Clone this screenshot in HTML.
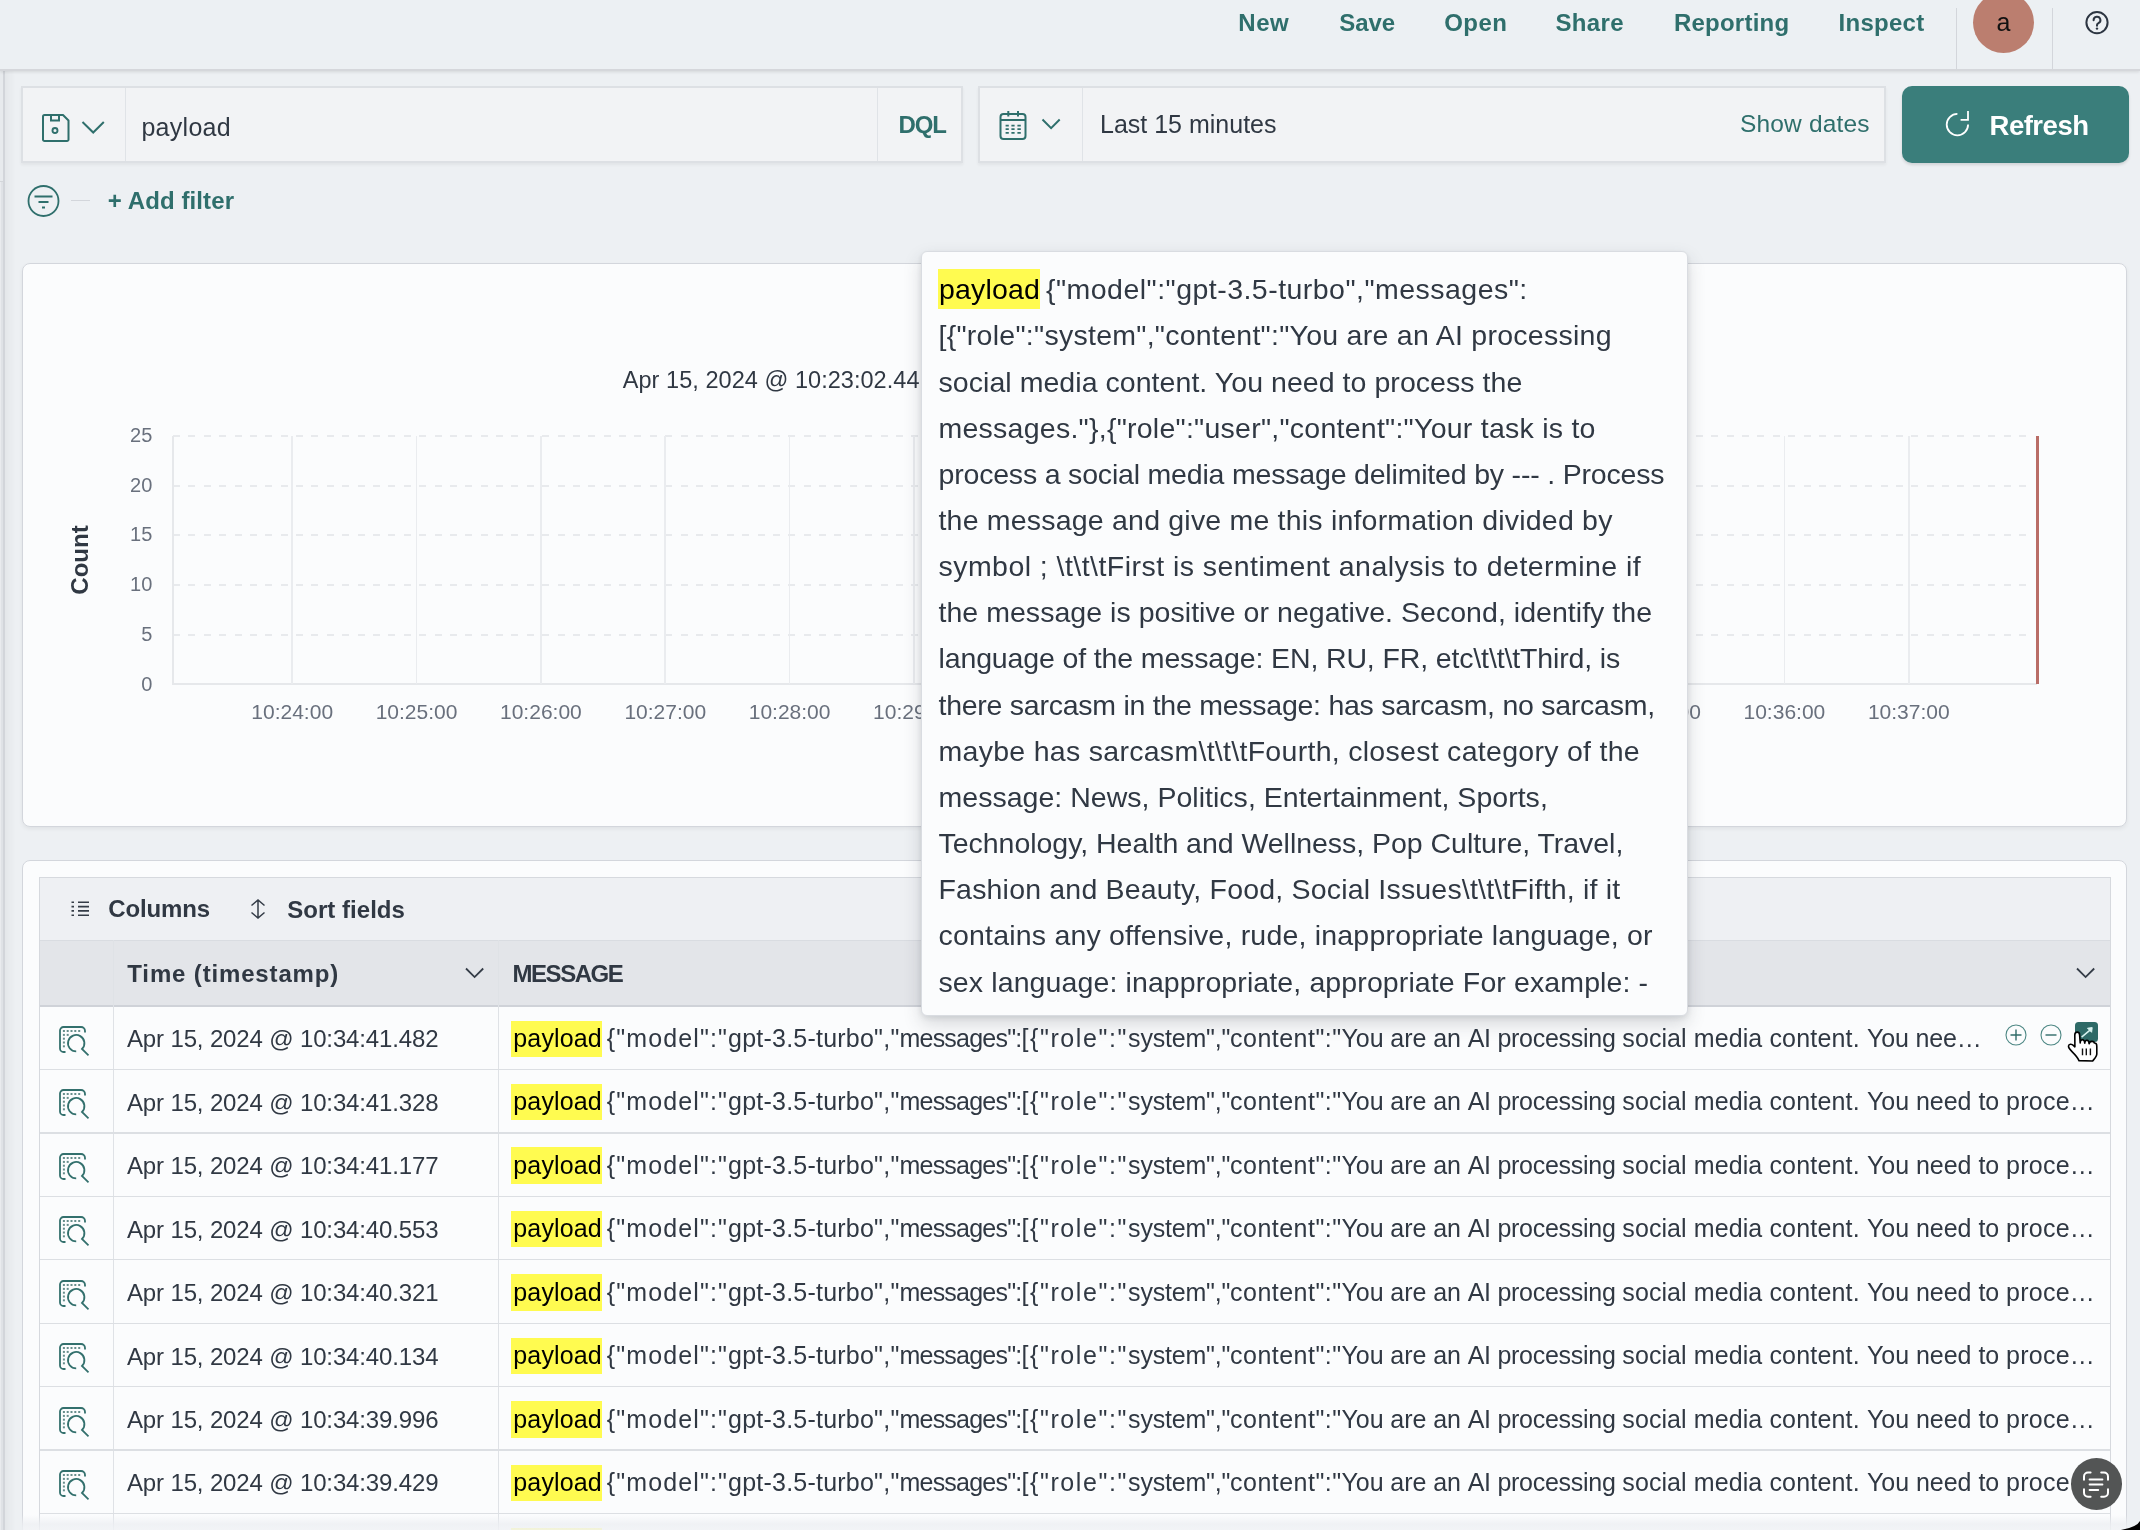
<!DOCTYPE html>
<html><head><meta charset="utf-8"><style>
html,body{margin:0;padding:0;}
body{width:2140px;height:1530px;overflow:hidden;background:#edf0f3;position:relative;font-family:"Liberation Sans", sans-serif;}
.a{position:absolute;}
.t{position:absolute;white-space:pre;line-height:1;}
</style></head><body>
<div id="root" style="position:absolute;left:0;top:0;width:2140px;height:1530px;will-change:transform;">
<div class="a" style="left:0.00px;top:69.00px;width:3.40px;height:112.00px;background:#e7eaed;"></div>
<div class="a" style="left:0.00px;top:181.00px;width:3.40px;height:1349.00px;background:#dfe2e6;"></div>
<div class="a" style="left:0.00px;top:180.50px;width:3.40px;height:1.50px;background:#d3d6da;"></div>
<div class="a" style="left:0.00px;top:182.00px;width:1.30px;height:1348.00px;background:#e9ebee;"></div>
<div class="a" style="left:3.30px;top:69.00px;width:1.30px;height:1461.00px;background:#d2d5da;"></div>
<div class="a" style="left:4.60px;top:69.00px;width:11.40px;height:1461.00px;background:linear-gradient(90deg,rgba(0,0,0,0.035),rgba(0,0,0,0));"></div>
<div class="a" style="left:0.00px;top:0.00px;width:2140.00px;height:70.50px;background:#ecf0f3;border-bottom:2px solid #d5d7db;box-sizing:border-box;box-shadow:0 1px 3px rgba(0,0,0,0.08),0 2px 4px rgba(0,0,0,0.03);"></div>
<div class="t" style="left:1238.20px;top:11.18px;font-size:24px;color:#2f6f6c;font-weight:700;letter-spacing:0.620px;">New</div>
<div class="t" style="left:1339.20px;top:11.18px;font-size:24px;color:#2f6f6c;font-weight:700;letter-spacing:-0.021px;">Save</div>
<div class="t" style="left:1444.30px;top:11.18px;font-size:24px;color:#2f6f6c;font-weight:700;letter-spacing:0.385px;">Open</div>
<div class="t" style="left:1555.50px;top:11.18px;font-size:24px;color:#2f6f6c;font-weight:700;letter-spacing:0.324px;">Share</div>
<div class="t" style="left:1673.90px;top:11.18px;font-size:24px;color:#2f6f6c;font-weight:700;letter-spacing:0.246px;">Reporting</div>
<div class="t" style="left:1838.60px;top:11.18px;font-size:24px;color:#2f6f6c;font-weight:700;letter-spacing:0.261px;">Inspect</div>
<div class="a" style="left:1956.10px;top:7.50px;width:1.00px;height:61.50px;background:#d3d6db;"></div>
<div class="a" style="left:2051.90px;top:7.50px;width:1.00px;height:61.50px;background:#d3d6db;"></div>
<div class="a" style="left:1973px;top:-8px;width:61.4px;height:61.4px;border-radius:50%;background:#bb7e6f;"></div>
<div class="t" style="left:2003.50px;top:10.34px;font-size:25px;color:#111;font-weight:400;transform:translateX(-50%);">a</div>
<svg class="a" style="left:2084px;top:10px" width="26" height="26" viewBox="0 0 26 26"><circle cx="13" cy="12.6" r="10.6" fill="none" stroke="#2c3541" stroke-width="2"/><path d="M9.6 10.2a3.4 3.4 0 1 1 4.6 3.1c-.8.4-1.2 1-1.2 1.8v.7" fill="none" stroke="#2c3541" stroke-width="2" stroke-linecap="round"/><circle cx="13" cy="18.6" r="1.2" fill="#2c3541"/></svg>
<div class="a" style="left:21.00px;top:86.00px;width:942.00px;height:77.00px;background:#f2f3f5;border:2px solid #dde0e4;box-sizing:border-box;box-shadow:0 2px 3px rgba(0,0,0,0.05);"></div>
<div class="a" style="left:124.80px;top:88.00px;width:1.20px;height:73.00px;background:#e0e3e7;"></div>
<div class="a" style="left:876.80px;top:88.00px;width:1.20px;height:73.00px;background:#e0e3e7;"></div>
<svg class="a" style="left:41px;top:113px" width="30" height="30" viewBox="0 0 30 30"><path d="M3.5 2h18.5l5.5 5.5V26.5a1.5 1.5 0 0 1-1.5 1.5H3.5a1.5 1.5 0 0 1-1.5-1.5V3.5A1.5 1.5 0 0 1 3.5 2z" fill="none" stroke="#2f6f6c" stroke-width="2" stroke-linejoin="round"/><path d="M10 2v5.5h8V2" fill="none" stroke="#2f6f6c" stroke-width="2"/><circle cx="14" cy="17.5" r="2.5" fill="none" stroke="#2f6f6c" stroke-width="1.9"/></svg>
<svg class="a" style="left:81px;top:120px" width="26" height="16" viewBox="0 0 26 16"><path d="M1.5 2l10.7 10.5L22.8 2" fill="none" stroke="#2f6f6c" stroke-width="2"/></svg>
<div class="t" style="left:141.40px;top:114.84px;font-size:25px;color:#303843;font-weight:400;letter-spacing:0.287px;">payload</div>
<div class="t" style="left:898.50px;top:113.18px;font-size:24px;color:#2f6f6c;font-weight:700;letter-spacing:-1.186px;">DQL</div>
<div class="a" style="left:978.20px;top:86.00px;width:907.80px;height:77.00px;background:#f2f3f5;border:2px solid #dde0e4;box-sizing:border-box;box-shadow:0 2px 3px rgba(0,0,0,0.05);"></div>
<div class="a" style="left:1082.30px;top:88.00px;width:1.20px;height:73.00px;background:#e0e3e7;"></div>
<svg class="a" style="left:998px;top:110px" width="30" height="31" viewBox="0 0 30 31"><rect x="2.5" y="4" width="25" height="25" rx="3" fill="none" stroke="#2f6f6c" stroke-width="2"/><path d="M2.5 10h25M10.3 1v5.5M20 1v5.5" stroke="#2f6f6c" stroke-width="2"/><path d="M7.6 15.6h3.2M13.4 15.6h3.2M19.4 15.6h3.4M7.6 19.1h3.2M13.4 19.1h3.2M19.4 19.1h3.4M7.6 22.9h3.2M13.4 22.9h3.2M19.4 22.9h3.4" stroke="#2f6f6c" stroke-width="1.7"/></svg>
<svg class="a" style="left:1041px;top:117px" width="22" height="14" viewBox="0 0 22 14"><path d="M1.5 2.5l8.6 8.6 8.6-8.6" fill="none" stroke="#2f6f6c" stroke-width="2"/></svg>
<div class="t" style="left:1100.00px;top:111.84px;font-size:25px;color:#303843;font-weight:400;">Last 15 minutes</div>
<div class="t" style="left:1740.00px;top:112.46px;font-size:24.5px;color:#2f6f6c;font-weight:400;letter-spacing:0.163px;">Show dates</div>
<div class="a" style="left:1901.50px;top:86.00px;width:227.10px;height:76.60px;background:#3a7e7b;border-radius:10px;box-shadow:0 2px 3px rgba(0,0,0,0.12);"></div>
<svg class="a" style="left:1943px;top:108px" width="30" height="30" viewBox="0 0 30 30"><path d="M14.4 5.9A10.7 10.7 0 1 0 25.1 16.6" fill="none" stroke="#fff" stroke-width="1.8"/><path d="M25 3v8.9h-7.4" fill="none" stroke="#fff" stroke-width="1.8"/></svg>
<div class="t" style="left:1989.50px;top:111.62px;font-size:27.5px;color:#fff;font-weight:700;letter-spacing:-0.484px;">Refresh</div>
<svg class="a" style="left:26px;top:184px" width="36" height="36" viewBox="0 0 36 36"><circle cx="17.5" cy="17" r="15" fill="none" stroke="#2f6f6c" stroke-width="1.8"/><path d="M8.5 12.5h18M12.5 18h10M16 23.5h3" stroke="#2f6f6c" stroke-width="2"/></svg>
<div class="a" style="left:70.60px;top:199.70px;width:19.40px;height:1.50px;background:#d3d6db;"></div>
<div class="t" style="left:107.70px;top:189.38px;font-size:24px;color:#2f6f6c;font-weight:700;letter-spacing:0.107px;">+ Add filter</div>
<div class="a" style="left:21.60px;top:263.40px;width:2105.90px;height:563.30px;background:#fbfcfd;border:1px solid #d3d6dc;border-radius:8px;box-sizing:border-box;box-shadow:0 2px 4px rgba(0,0,0,0.06);"></div>
<div class="t" style="left:622.80px;top:368.61px;font-size:23.5px;color:#303843;font-weight:400;letter-spacing:0.042px;">Apr 15, 2024 @ 10:23:02.44</div>
<div class="t" style="right:1987.70px;top:425.07px;font-size:20px;color:#69707d;font-weight:400;">25</div>
<div class="a" style="left:173.1px;top:434.8px;width:1854px;height:2px;background:repeating-linear-gradient(90deg,#e8eaed 0 7px,transparent 7px 15.383px);"></div>
<div class="t" style="right:1987.70px;top:474.77px;font-size:20px;color:#69707d;font-weight:400;">20</div>
<div class="a" style="left:173.1px;top:484.5px;width:1854px;height:2px;background:repeating-linear-gradient(90deg,#e8eaed 0 7px,transparent 7px 15.383px);"></div>
<div class="t" style="right:1987.70px;top:524.47px;font-size:20px;color:#69707d;font-weight:400;">15</div>
<div class="a" style="left:173.1px;top:534.2px;width:1854px;height:2px;background:repeating-linear-gradient(90deg,#e8eaed 0 7px,transparent 7px 15.383px);"></div>
<div class="t" style="right:1987.70px;top:574.17px;font-size:20px;color:#69707d;font-weight:400;">10</div>
<div class="a" style="left:173.1px;top:583.9px;width:1854px;height:2px;background:repeating-linear-gradient(90deg,#e8eaed 0 7px,transparent 7px 15.383px);"></div>
<div class="t" style="right:1987.70px;top:623.87px;font-size:20px;color:#69707d;font-weight:400;">5</div>
<div class="a" style="left:173.1px;top:633.6px;width:1854px;height:2px;background:repeating-linear-gradient(90deg,#e8eaed 0 7px,transparent 7px 15.383px);"></div>
<div class="t" style="right:1987.70px;top:673.57px;font-size:20px;color:#69707d;font-weight:400;">0</div>
<div class="a" style="left:172.00px;top:683.30px;width:1865.00px;height:1.70px;background:#e6e8eb;"></div>
<div class="a" style="left:172.00px;top:435.80px;width:1.80px;height:249.20px;background:#e6e8eb;"></div>
<div class="a" style="left:291.40px;top:435.80px;width:1.60px;height:248.20px;background:#eaecef;"></div>
<div class="t" style="left:292.20px;top:700.82px;font-size:21px;color:#69707d;font-weight:400;transform:translateX(-50%);">10:24:00</div>
<div class="a" style="left:415.75px;top:435.80px;width:1.60px;height:248.20px;background:#eaecef;"></div>
<div class="t" style="left:416.55px;top:700.82px;font-size:21px;color:#69707d;font-weight:400;transform:translateX(-50%);">10:25:00</div>
<div class="a" style="left:540.10px;top:435.80px;width:1.60px;height:248.20px;background:#eaecef;"></div>
<div class="t" style="left:540.90px;top:700.82px;font-size:21px;color:#69707d;font-weight:400;transform:translateX(-50%);">10:26:00</div>
<div class="a" style="left:664.45px;top:435.80px;width:1.60px;height:248.20px;background:#eaecef;"></div>
<div class="t" style="left:665.25px;top:700.82px;font-size:21px;color:#69707d;font-weight:400;transform:translateX(-50%);">10:27:00</div>
<div class="a" style="left:788.80px;top:435.80px;width:1.60px;height:248.20px;background:#eaecef;"></div>
<div class="t" style="left:789.60px;top:700.82px;font-size:21px;color:#69707d;font-weight:400;transform:translateX(-50%);">10:28:00</div>
<div class="a" style="left:913.15px;top:435.80px;width:1.60px;height:248.20px;background:#eaecef;"></div>
<div class="t" style="left:913.95px;top:700.82px;font-size:21px;color:#69707d;font-weight:400;transform:translateX(-50%);">10:29:00</div>
<div class="a" style="left:1037.50px;top:435.80px;width:1.60px;height:248.20px;background:#eaecef;"></div>
<div class="t" style="left:1038.30px;top:700.82px;font-size:21px;color:#69707d;font-weight:400;transform:translateX(-50%);">10:30:00</div>
<div class="a" style="left:1161.85px;top:435.80px;width:1.60px;height:248.20px;background:#eaecef;"></div>
<div class="t" style="left:1162.65px;top:700.82px;font-size:21px;color:#69707d;font-weight:400;transform:translateX(-50%);">10:31:00</div>
<div class="a" style="left:1286.20px;top:435.80px;width:1.60px;height:248.20px;background:#eaecef;"></div>
<div class="t" style="left:1287.00px;top:700.82px;font-size:21px;color:#69707d;font-weight:400;transform:translateX(-50%);">10:32:00</div>
<div class="a" style="left:1410.55px;top:435.80px;width:1.60px;height:248.20px;background:#eaecef;"></div>
<div class="t" style="left:1411.35px;top:700.82px;font-size:21px;color:#69707d;font-weight:400;transform:translateX(-50%);">10:33:00</div>
<div class="a" style="left:1534.90px;top:435.80px;width:1.60px;height:248.20px;background:#eaecef;"></div>
<div class="t" style="left:1535.70px;top:700.82px;font-size:21px;color:#69707d;font-weight:400;transform:translateX(-50%);">10:34:00</div>
<div class="a" style="left:1659.25px;top:435.80px;width:1.60px;height:248.20px;background:#eaecef;"></div>
<div class="t" style="left:1660.05px;top:700.82px;font-size:21px;color:#69707d;font-weight:400;transform:translateX(-50%);">10:35:00</div>
<div class="a" style="left:1783.60px;top:435.80px;width:1.60px;height:248.20px;background:#eaecef;"></div>
<div class="t" style="left:1784.40px;top:700.82px;font-size:21px;color:#69707d;font-weight:400;transform:translateX(-50%);">10:36:00</div>
<div class="a" style="left:1907.95px;top:435.80px;width:1.60px;height:248.20px;background:#eaecef;"></div>
<div class="t" style="left:1908.75px;top:700.82px;font-size:21px;color:#69707d;font-weight:400;transform:translateX(-50%);">10:37:00</div>
<div class="a" style="left:2035.50px;top:435.70px;width:3.30px;height:248.00px;background:#b96d67;"></div>
<div class="a" style="left:71px;top:559.4px;width:0;height:0;"><div style="position:absolute;left:0;top:0;transform:translate(-50%,-50%) rotate(-90deg);white-space:nowrap;"></div></div>
<div class="t" style="left:80.30px;top:547.58px;font-size:24px;color:#303843;font-weight:700;transform:translateX(-50%) rotate(-90deg);transform-origin:50% 50%;">Count</div>
<div class="a" style="left:22.00px;top:860.00px;width:2105.00px;height:740.00px;background:#fbfcfd;border:1px solid #d3d6dc;border-radius:8px;box-sizing:border-box;"></div>
<div class="a" style="left:38.50px;top:877.00px;width:2072.00px;height:723.00px;background:#fbfcfd;border:1px solid #d6d9de;box-sizing:border-box;"></div>
<div class="a" style="left:39.50px;top:878.00px;width:2070.00px;height:62.40px;background:#eef0f3;"></div>
<svg class="a" style="left:70px;top:899px" width="22" height="20" viewBox="0 0 22 20"><path d="M1.5 3.3h2.5M1.5 7.6h2.5M1.5 11.9h2.5M1.5 16.2h2.5M8 3.3h11M8 7.6h11M8 11.9h11M8 16.2h11" stroke="#343c47" stroke-width="1.6"/></svg>
<div class="t" style="left:108.20px;top:897.28px;font-size:24px;color:#303843;font-weight:700;letter-spacing:-0.129px;">Columns</div>
<svg class="a" style="left:249px;top:898px" width="18" height="22" viewBox="0 0 18 22"><path d="M2.5 7.5l6.5-5.5L15.5 7.5M2.5 14.5l6.5 5.5 6.5-5.5M9 2v18" fill="none" stroke="#343c47" stroke-width="1.5"/></svg>
<div class="t" style="left:287.20px;top:897.58px;font-size:24px;color:#303843;font-weight:700;letter-spacing:0.034px;">Sort fields</div>
<div class="a" style="left:39.50px;top:940.40px;width:2070.00px;height:65.60px;background:#e3e5e9;border-top:1px solid #d9dce1;box-sizing:border-box;"></div>
<div class="a" style="left:39.50px;top:1005.30px;width:2070.00px;height:1.30px;background:#cfd2d8;"></div>
<div class="a" style="left:113.20px;top:940.40px;width:1.20px;height:659.60px;background:#dfe2e6;"></div>
<div class="a" style="left:498.00px;top:940.40px;width:1.20px;height:659.60px;background:#dfe2e6;"></div>
<div class="t" style="left:127.30px;top:961.68px;font-size:24px;color:#303843;font-weight:700;letter-spacing:0.848px;">Time (timestamp)</div>
<svg class="a" style="left:464px;top:966px" width="22" height="14" viewBox="0 0 22 14"><path d="M2 2.5l8.6 8.6 8.6-8.6" fill="none" stroke="#343c47" stroke-width="1.8"/></svg>
<div class="t" style="left:512.60px;top:961.68px;font-size:24px;color:#303843;font-weight:700;letter-spacing:-1.489px;">MESSAGE</div>
<svg class="a" style="left:2075px;top:966px" width="22" height="14" viewBox="0 0 22 14"><path d="M2 2.5l8.6 8.6 8.6-8.6" fill="none" stroke="#343c47" stroke-width="1.8"/></svg>
<div class="a" style="left:39.50px;top:1068.80px;width:2070.00px;height:1.30px;background:#dcdfe3;"></div>
<svg class="a" style="left:54px;top:1020.0px" width="40" height="40" viewBox="0 0 40 40"><path d="M11.5 32H9.5A3.5 3.5 0 0 1 6 28.5V10.5A3.5 3.5 0 0 1 9.5 7H27A4 4 0 0 1 31 11V12.6" fill="none" stroke="#33706d" stroke-width="1.8"/><g fill="#678e8c"><rect x="8.9" y="10.0" width="2" height="2"/><rect x="12.7" y="10.0" width="2" height="2"/><rect x="16.5" y="10.0" width="2" height="2"/><rect x="20.3" y="10.0" width="2" height="2"/><rect x="24.2" y="10.0" width="2" height="2"/><rect x="8.9" y="13.9" width="2" height="2"/><rect x="12.7" y="13.9" width="2" height="2"/><rect x="8.9" y="17.7" width="2" height="2"/><rect x="8.9" y="21.5" width="2" height="2"/><rect x="8.9" y="25.3" width="2" height="2"/></g><path d="M22.2 31.4A8.2 8.2 0 1 1 28 29L34.5 35.3" fill="none" stroke="#33706d" stroke-width="1.8"/></svg>
<div class="t" style="left:127.00px;top:1027.48px;font-size:24px;color:#303843;font-weight:400;letter-spacing:-0.145px;">Apr 15, 2024 @ 10:34:41.482</div>
<div class="a" style="left:511.20px;top:1020.60px;width:90.70px;height:36.40px;background:#fffb50;"></div>
<div class="t" style="left:513.30px;top:1026.04px;font-size:25px;color:#000;font-weight:400;letter-spacing:0.137px;">payload</div>
<div class="t" style="left:606.80px;top:1026.04px;font-size:25px;color:#303843;font-weight:400;letter-spacing:1.128px;">{&quot;model&quot;:&quot;</div>
<div class="t" style="left:728.10px;top:1026.04px;font-size:25px;color:#303843;font-weight:400;letter-spacing:0.222px;">gpt-3.5-turbo&quot;,&quot;</div>
<div class="t" style="left:899.50px;top:1026.04px;font-size:25px;color:#303843;font-weight:400;letter-spacing:-0.787px;">messages&quot;:</div>
<div class="t" style="left:1021.40px;top:1026.04px;font-size:25px;color:#303843;font-weight:400;letter-spacing:1.614px;">[{&quot;role&quot;:&quot;</div>
<div class="t" style="left:1128.10px;top:1026.04px;font-size:25px;color:#303843;font-weight:400;letter-spacing:-0.208px;">system&quot;,&quot;</div>
<div class="t" style="left:1230.10px;top:1026.04px;font-size:25px;color:#303843;font-weight:400;letter-spacing:0.470px;">content&quot;:&quot;</div>
<div class="t" style="left:1341.50px;top:1026.04px;font-size:25px;color:#303843;font-weight:400;letter-spacing:-0.070px;">You are an </div>
<div class="t" style="left:1467.70px;top:1026.04px;font-size:25px;color:#303843;font-weight:400;letter-spacing:-0.273px;">AI processing </div>
<div class="t" style="left:1622.30px;top:1026.04px;font-size:25px;color:#303843;font-weight:400;letter-spacing:0.092px;">social media </div>
<div class="t" style="left:1769.40px;top:1026.04px;font-size:25px;color:#303843;font-weight:400;letter-spacing:0.188px;">content. </div>
<div class="t" style="left:1867.00px;top:1026.04px;font-size:25px;color:#303843;font-weight:400;letter-spacing:-0.151px;">You nee…</div>
<div class="a" style="left:39.50px;top:1132.23px;width:2070.00px;height:1.30px;background:#dcdfe3;"></div>
<svg class="a" style="left:54px;top:1083.4px" width="40" height="40" viewBox="0 0 40 40"><path d="M11.5 32H9.5A3.5 3.5 0 0 1 6 28.5V10.5A3.5 3.5 0 0 1 9.5 7H27A4 4 0 0 1 31 11V12.6" fill="none" stroke="#33706d" stroke-width="1.8"/><g fill="#678e8c"><rect x="8.9" y="10.0" width="2" height="2"/><rect x="12.7" y="10.0" width="2" height="2"/><rect x="16.5" y="10.0" width="2" height="2"/><rect x="20.3" y="10.0" width="2" height="2"/><rect x="24.2" y="10.0" width="2" height="2"/><rect x="8.9" y="13.9" width="2" height="2"/><rect x="12.7" y="13.9" width="2" height="2"/><rect x="8.9" y="17.7" width="2" height="2"/><rect x="8.9" y="21.5" width="2" height="2"/><rect x="8.9" y="25.3" width="2" height="2"/></g><path d="M22.2 31.4A8.2 8.2 0 1 1 28 29L34.5 35.3" fill="none" stroke="#33706d" stroke-width="1.8"/></svg>
<div class="t" style="left:127.00px;top:1090.91px;font-size:24px;color:#303843;font-weight:400;letter-spacing:-0.145px;">Apr 15, 2024 @ 10:34:41.328</div>
<div class="a" style="left:511.20px;top:1084.03px;width:90.70px;height:36.40px;background:#fffb50;"></div>
<div class="t" style="left:513.30px;top:1089.47px;font-size:25px;color:#000;font-weight:400;letter-spacing:0.137px;">payload</div>
<div class="t" style="left:606.80px;top:1089.47px;font-size:25px;color:#303843;font-weight:400;letter-spacing:1.128px;">{&quot;model&quot;:&quot;</div>
<div class="t" style="left:728.10px;top:1089.47px;font-size:25px;color:#303843;font-weight:400;letter-spacing:0.222px;">gpt-3.5-turbo&quot;,&quot;</div>
<div class="t" style="left:899.50px;top:1089.47px;font-size:25px;color:#303843;font-weight:400;letter-spacing:-0.787px;">messages&quot;:</div>
<div class="t" style="left:1021.40px;top:1089.47px;font-size:25px;color:#303843;font-weight:400;letter-spacing:1.614px;">[{&quot;role&quot;:&quot;</div>
<div class="t" style="left:1128.10px;top:1089.47px;font-size:25px;color:#303843;font-weight:400;letter-spacing:-0.208px;">system&quot;,&quot;</div>
<div class="t" style="left:1230.10px;top:1089.47px;font-size:25px;color:#303843;font-weight:400;letter-spacing:0.470px;">content&quot;:&quot;</div>
<div class="t" style="left:1341.50px;top:1089.47px;font-size:25px;color:#303843;font-weight:400;letter-spacing:-0.070px;">You are an </div>
<div class="t" style="left:1467.70px;top:1089.47px;font-size:25px;color:#303843;font-weight:400;letter-spacing:-0.273px;">AI processing </div>
<div class="t" style="left:1622.30px;top:1089.47px;font-size:25px;color:#303843;font-weight:400;letter-spacing:0.092px;">social media </div>
<div class="t" style="left:1769.40px;top:1089.47px;font-size:25px;color:#303843;font-weight:400;letter-spacing:0.188px;">content. </div>
<div class="t" style="left:1867.00px;top:1089.47px;font-size:25px;color:#303843;font-weight:400;letter-spacing:-0.033px;">You need to </div>
<div class="t" style="left:2006.10px;top:1089.47px;font-size:25px;color:#303843;font-weight:400;letter-spacing:0.231px;">proce…</div>
<div class="a" style="left:39.50px;top:1195.66px;width:2070.00px;height:1.30px;background:#dcdfe3;"></div>
<svg class="a" style="left:54px;top:1146.9px" width="40" height="40" viewBox="0 0 40 40"><path d="M11.5 32H9.5A3.5 3.5 0 0 1 6 28.5V10.5A3.5 3.5 0 0 1 9.5 7H27A4 4 0 0 1 31 11V12.6" fill="none" stroke="#33706d" stroke-width="1.8"/><g fill="#678e8c"><rect x="8.9" y="10.0" width="2" height="2"/><rect x="12.7" y="10.0" width="2" height="2"/><rect x="16.5" y="10.0" width="2" height="2"/><rect x="20.3" y="10.0" width="2" height="2"/><rect x="24.2" y="10.0" width="2" height="2"/><rect x="8.9" y="13.9" width="2" height="2"/><rect x="12.7" y="13.9" width="2" height="2"/><rect x="8.9" y="17.7" width="2" height="2"/><rect x="8.9" y="21.5" width="2" height="2"/><rect x="8.9" y="25.3" width="2" height="2"/></g><path d="M22.2 31.4A8.2 8.2 0 1 1 28 29L34.5 35.3" fill="none" stroke="#33706d" stroke-width="1.8"/></svg>
<div class="t" style="left:127.00px;top:1154.34px;font-size:24px;color:#303843;font-weight:400;letter-spacing:-0.145px;">Apr 15, 2024 @ 10:34:41.177</div>
<div class="a" style="left:511.20px;top:1147.46px;width:90.70px;height:36.40px;background:#fffb50;"></div>
<div class="t" style="left:513.30px;top:1152.90px;font-size:25px;color:#000;font-weight:400;letter-spacing:0.137px;">payload</div>
<div class="t" style="left:606.80px;top:1152.90px;font-size:25px;color:#303843;font-weight:400;letter-spacing:1.128px;">{&quot;model&quot;:&quot;</div>
<div class="t" style="left:728.10px;top:1152.90px;font-size:25px;color:#303843;font-weight:400;letter-spacing:0.222px;">gpt-3.5-turbo&quot;,&quot;</div>
<div class="t" style="left:899.50px;top:1152.90px;font-size:25px;color:#303843;font-weight:400;letter-spacing:-0.787px;">messages&quot;:</div>
<div class="t" style="left:1021.40px;top:1152.90px;font-size:25px;color:#303843;font-weight:400;letter-spacing:1.614px;">[{&quot;role&quot;:&quot;</div>
<div class="t" style="left:1128.10px;top:1152.90px;font-size:25px;color:#303843;font-weight:400;letter-spacing:-0.208px;">system&quot;,&quot;</div>
<div class="t" style="left:1230.10px;top:1152.90px;font-size:25px;color:#303843;font-weight:400;letter-spacing:0.470px;">content&quot;:&quot;</div>
<div class="t" style="left:1341.50px;top:1152.90px;font-size:25px;color:#303843;font-weight:400;letter-spacing:-0.070px;">You are an </div>
<div class="t" style="left:1467.70px;top:1152.90px;font-size:25px;color:#303843;font-weight:400;letter-spacing:-0.273px;">AI processing </div>
<div class="t" style="left:1622.30px;top:1152.90px;font-size:25px;color:#303843;font-weight:400;letter-spacing:0.092px;">social media </div>
<div class="t" style="left:1769.40px;top:1152.90px;font-size:25px;color:#303843;font-weight:400;letter-spacing:0.188px;">content. </div>
<div class="t" style="left:1867.00px;top:1152.90px;font-size:25px;color:#303843;font-weight:400;letter-spacing:-0.033px;">You need to </div>
<div class="t" style="left:2006.10px;top:1152.90px;font-size:25px;color:#303843;font-weight:400;letter-spacing:0.231px;">proce…</div>
<div class="a" style="left:39.50px;top:1259.09px;width:2070.00px;height:1.30px;background:#dcdfe3;"></div>
<svg class="a" style="left:54px;top:1210.3px" width="40" height="40" viewBox="0 0 40 40"><path d="M11.5 32H9.5A3.5 3.5 0 0 1 6 28.5V10.5A3.5 3.5 0 0 1 9.5 7H27A4 4 0 0 1 31 11V12.6" fill="none" stroke="#33706d" stroke-width="1.8"/><g fill="#678e8c"><rect x="8.9" y="10.0" width="2" height="2"/><rect x="12.7" y="10.0" width="2" height="2"/><rect x="16.5" y="10.0" width="2" height="2"/><rect x="20.3" y="10.0" width="2" height="2"/><rect x="24.2" y="10.0" width="2" height="2"/><rect x="8.9" y="13.9" width="2" height="2"/><rect x="12.7" y="13.9" width="2" height="2"/><rect x="8.9" y="17.7" width="2" height="2"/><rect x="8.9" y="21.5" width="2" height="2"/><rect x="8.9" y="25.3" width="2" height="2"/></g><path d="M22.2 31.4A8.2 8.2 0 1 1 28 29L34.5 35.3" fill="none" stroke="#33706d" stroke-width="1.8"/></svg>
<div class="t" style="left:127.00px;top:1217.77px;font-size:24px;color:#303843;font-weight:400;letter-spacing:-0.145px;">Apr 15, 2024 @ 10:34:40.553</div>
<div class="a" style="left:511.20px;top:1210.89px;width:90.70px;height:36.40px;background:#fffb50;"></div>
<div class="t" style="left:513.30px;top:1216.33px;font-size:25px;color:#000;font-weight:400;letter-spacing:0.137px;">payload</div>
<div class="t" style="left:606.80px;top:1216.33px;font-size:25px;color:#303843;font-weight:400;letter-spacing:1.128px;">{&quot;model&quot;:&quot;</div>
<div class="t" style="left:728.10px;top:1216.33px;font-size:25px;color:#303843;font-weight:400;letter-spacing:0.222px;">gpt-3.5-turbo&quot;,&quot;</div>
<div class="t" style="left:899.50px;top:1216.33px;font-size:25px;color:#303843;font-weight:400;letter-spacing:-0.787px;">messages&quot;:</div>
<div class="t" style="left:1021.40px;top:1216.33px;font-size:25px;color:#303843;font-weight:400;letter-spacing:1.614px;">[{&quot;role&quot;:&quot;</div>
<div class="t" style="left:1128.10px;top:1216.33px;font-size:25px;color:#303843;font-weight:400;letter-spacing:-0.208px;">system&quot;,&quot;</div>
<div class="t" style="left:1230.10px;top:1216.33px;font-size:25px;color:#303843;font-weight:400;letter-spacing:0.470px;">content&quot;:&quot;</div>
<div class="t" style="left:1341.50px;top:1216.33px;font-size:25px;color:#303843;font-weight:400;letter-spacing:-0.070px;">You are an </div>
<div class="t" style="left:1467.70px;top:1216.33px;font-size:25px;color:#303843;font-weight:400;letter-spacing:-0.273px;">AI processing </div>
<div class="t" style="left:1622.30px;top:1216.33px;font-size:25px;color:#303843;font-weight:400;letter-spacing:0.092px;">social media </div>
<div class="t" style="left:1769.40px;top:1216.33px;font-size:25px;color:#303843;font-weight:400;letter-spacing:0.188px;">content. </div>
<div class="t" style="left:1867.00px;top:1216.33px;font-size:25px;color:#303843;font-weight:400;letter-spacing:-0.033px;">You need to </div>
<div class="t" style="left:2006.10px;top:1216.33px;font-size:25px;color:#303843;font-weight:400;letter-spacing:0.231px;">proce…</div>
<div class="a" style="left:39.50px;top:1322.52px;width:2070.00px;height:1.30px;background:#dcdfe3;"></div>
<svg class="a" style="left:54px;top:1273.7px" width="40" height="40" viewBox="0 0 40 40"><path d="M11.5 32H9.5A3.5 3.5 0 0 1 6 28.5V10.5A3.5 3.5 0 0 1 9.5 7H27A4 4 0 0 1 31 11V12.6" fill="none" stroke="#33706d" stroke-width="1.8"/><g fill="#678e8c"><rect x="8.9" y="10.0" width="2" height="2"/><rect x="12.7" y="10.0" width="2" height="2"/><rect x="16.5" y="10.0" width="2" height="2"/><rect x="20.3" y="10.0" width="2" height="2"/><rect x="24.2" y="10.0" width="2" height="2"/><rect x="8.9" y="13.9" width="2" height="2"/><rect x="12.7" y="13.9" width="2" height="2"/><rect x="8.9" y="17.7" width="2" height="2"/><rect x="8.9" y="21.5" width="2" height="2"/><rect x="8.9" y="25.3" width="2" height="2"/></g><path d="M22.2 31.4A8.2 8.2 0 1 1 28 29L34.5 35.3" fill="none" stroke="#33706d" stroke-width="1.8"/></svg>
<div class="t" style="left:127.00px;top:1281.20px;font-size:24px;color:#303843;font-weight:400;letter-spacing:-0.145px;">Apr 15, 2024 @ 10:34:40.321</div>
<div class="a" style="left:511.20px;top:1274.32px;width:90.70px;height:36.40px;background:#fffb50;"></div>
<div class="t" style="left:513.30px;top:1279.76px;font-size:25px;color:#000;font-weight:400;letter-spacing:0.137px;">payload</div>
<div class="t" style="left:606.80px;top:1279.76px;font-size:25px;color:#303843;font-weight:400;letter-spacing:1.128px;">{&quot;model&quot;:&quot;</div>
<div class="t" style="left:728.10px;top:1279.76px;font-size:25px;color:#303843;font-weight:400;letter-spacing:0.222px;">gpt-3.5-turbo&quot;,&quot;</div>
<div class="t" style="left:899.50px;top:1279.76px;font-size:25px;color:#303843;font-weight:400;letter-spacing:-0.787px;">messages&quot;:</div>
<div class="t" style="left:1021.40px;top:1279.76px;font-size:25px;color:#303843;font-weight:400;letter-spacing:1.614px;">[{&quot;role&quot;:&quot;</div>
<div class="t" style="left:1128.10px;top:1279.76px;font-size:25px;color:#303843;font-weight:400;letter-spacing:-0.208px;">system&quot;,&quot;</div>
<div class="t" style="left:1230.10px;top:1279.76px;font-size:25px;color:#303843;font-weight:400;letter-spacing:0.470px;">content&quot;:&quot;</div>
<div class="t" style="left:1341.50px;top:1279.76px;font-size:25px;color:#303843;font-weight:400;letter-spacing:-0.070px;">You are an </div>
<div class="t" style="left:1467.70px;top:1279.76px;font-size:25px;color:#303843;font-weight:400;letter-spacing:-0.273px;">AI processing </div>
<div class="t" style="left:1622.30px;top:1279.76px;font-size:25px;color:#303843;font-weight:400;letter-spacing:0.092px;">social media </div>
<div class="t" style="left:1769.40px;top:1279.76px;font-size:25px;color:#303843;font-weight:400;letter-spacing:0.188px;">content. </div>
<div class="t" style="left:1867.00px;top:1279.76px;font-size:25px;color:#303843;font-weight:400;letter-spacing:-0.033px;">You need to </div>
<div class="t" style="left:2006.10px;top:1279.76px;font-size:25px;color:#303843;font-weight:400;letter-spacing:0.231px;">proce…</div>
<div class="a" style="left:39.50px;top:1385.95px;width:2070.00px;height:1.30px;background:#dcdfe3;"></div>
<svg class="a" style="left:54px;top:1337.2px" width="40" height="40" viewBox="0 0 40 40"><path d="M11.5 32H9.5A3.5 3.5 0 0 1 6 28.5V10.5A3.5 3.5 0 0 1 9.5 7H27A4 4 0 0 1 31 11V12.6" fill="none" stroke="#33706d" stroke-width="1.8"/><g fill="#678e8c"><rect x="8.9" y="10.0" width="2" height="2"/><rect x="12.7" y="10.0" width="2" height="2"/><rect x="16.5" y="10.0" width="2" height="2"/><rect x="20.3" y="10.0" width="2" height="2"/><rect x="24.2" y="10.0" width="2" height="2"/><rect x="8.9" y="13.9" width="2" height="2"/><rect x="12.7" y="13.9" width="2" height="2"/><rect x="8.9" y="17.7" width="2" height="2"/><rect x="8.9" y="21.5" width="2" height="2"/><rect x="8.9" y="25.3" width="2" height="2"/></g><path d="M22.2 31.4A8.2 8.2 0 1 1 28 29L34.5 35.3" fill="none" stroke="#33706d" stroke-width="1.8"/></svg>
<div class="t" style="left:127.00px;top:1344.63px;font-size:24px;color:#303843;font-weight:400;letter-spacing:-0.145px;">Apr 15, 2024 @ 10:34:40.134</div>
<div class="a" style="left:511.20px;top:1337.75px;width:90.70px;height:36.40px;background:#fffb50;"></div>
<div class="t" style="left:513.30px;top:1343.19px;font-size:25px;color:#000;font-weight:400;letter-spacing:0.137px;">payload</div>
<div class="t" style="left:606.80px;top:1343.19px;font-size:25px;color:#303843;font-weight:400;letter-spacing:1.128px;">{&quot;model&quot;:&quot;</div>
<div class="t" style="left:728.10px;top:1343.19px;font-size:25px;color:#303843;font-weight:400;letter-spacing:0.222px;">gpt-3.5-turbo&quot;,&quot;</div>
<div class="t" style="left:899.50px;top:1343.19px;font-size:25px;color:#303843;font-weight:400;letter-spacing:-0.787px;">messages&quot;:</div>
<div class="t" style="left:1021.40px;top:1343.19px;font-size:25px;color:#303843;font-weight:400;letter-spacing:1.614px;">[{&quot;role&quot;:&quot;</div>
<div class="t" style="left:1128.10px;top:1343.19px;font-size:25px;color:#303843;font-weight:400;letter-spacing:-0.208px;">system&quot;,&quot;</div>
<div class="t" style="left:1230.10px;top:1343.19px;font-size:25px;color:#303843;font-weight:400;letter-spacing:0.470px;">content&quot;:&quot;</div>
<div class="t" style="left:1341.50px;top:1343.19px;font-size:25px;color:#303843;font-weight:400;letter-spacing:-0.070px;">You are an </div>
<div class="t" style="left:1467.70px;top:1343.19px;font-size:25px;color:#303843;font-weight:400;letter-spacing:-0.273px;">AI processing </div>
<div class="t" style="left:1622.30px;top:1343.19px;font-size:25px;color:#303843;font-weight:400;letter-spacing:0.092px;">social media </div>
<div class="t" style="left:1769.40px;top:1343.19px;font-size:25px;color:#303843;font-weight:400;letter-spacing:0.188px;">content. </div>
<div class="t" style="left:1867.00px;top:1343.19px;font-size:25px;color:#303843;font-weight:400;letter-spacing:-0.033px;">You need to </div>
<div class="t" style="left:2006.10px;top:1343.19px;font-size:25px;color:#303843;font-weight:400;letter-spacing:0.231px;">proce…</div>
<div class="a" style="left:39.50px;top:1449.38px;width:2070.00px;height:1.30px;background:#dcdfe3;"></div>
<svg class="a" style="left:54px;top:1400.6px" width="40" height="40" viewBox="0 0 40 40"><path d="M11.5 32H9.5A3.5 3.5 0 0 1 6 28.5V10.5A3.5 3.5 0 0 1 9.5 7H27A4 4 0 0 1 31 11V12.6" fill="none" stroke="#33706d" stroke-width="1.8"/><g fill="#678e8c"><rect x="8.9" y="10.0" width="2" height="2"/><rect x="12.7" y="10.0" width="2" height="2"/><rect x="16.5" y="10.0" width="2" height="2"/><rect x="20.3" y="10.0" width="2" height="2"/><rect x="24.2" y="10.0" width="2" height="2"/><rect x="8.9" y="13.9" width="2" height="2"/><rect x="12.7" y="13.9" width="2" height="2"/><rect x="8.9" y="17.7" width="2" height="2"/><rect x="8.9" y="21.5" width="2" height="2"/><rect x="8.9" y="25.3" width="2" height="2"/></g><path d="M22.2 31.4A8.2 8.2 0 1 1 28 29L34.5 35.3" fill="none" stroke="#33706d" stroke-width="1.8"/></svg>
<div class="t" style="left:127.00px;top:1408.06px;font-size:24px;color:#303843;font-weight:400;letter-spacing:-0.145px;">Apr 15, 2024 @ 10:34:39.996</div>
<div class="a" style="left:511.20px;top:1401.18px;width:90.70px;height:36.40px;background:#fffb50;"></div>
<div class="t" style="left:513.30px;top:1406.62px;font-size:25px;color:#000;font-weight:400;letter-spacing:0.137px;">payload</div>
<div class="t" style="left:606.80px;top:1406.62px;font-size:25px;color:#303843;font-weight:400;letter-spacing:1.128px;">{&quot;model&quot;:&quot;</div>
<div class="t" style="left:728.10px;top:1406.62px;font-size:25px;color:#303843;font-weight:400;letter-spacing:0.222px;">gpt-3.5-turbo&quot;,&quot;</div>
<div class="t" style="left:899.50px;top:1406.62px;font-size:25px;color:#303843;font-weight:400;letter-spacing:-0.787px;">messages&quot;:</div>
<div class="t" style="left:1021.40px;top:1406.62px;font-size:25px;color:#303843;font-weight:400;letter-spacing:1.614px;">[{&quot;role&quot;:&quot;</div>
<div class="t" style="left:1128.10px;top:1406.62px;font-size:25px;color:#303843;font-weight:400;letter-spacing:-0.208px;">system&quot;,&quot;</div>
<div class="t" style="left:1230.10px;top:1406.62px;font-size:25px;color:#303843;font-weight:400;letter-spacing:0.470px;">content&quot;:&quot;</div>
<div class="t" style="left:1341.50px;top:1406.62px;font-size:25px;color:#303843;font-weight:400;letter-spacing:-0.070px;">You are an </div>
<div class="t" style="left:1467.70px;top:1406.62px;font-size:25px;color:#303843;font-weight:400;letter-spacing:-0.273px;">AI processing </div>
<div class="t" style="left:1622.30px;top:1406.62px;font-size:25px;color:#303843;font-weight:400;letter-spacing:0.092px;">social media </div>
<div class="t" style="left:1769.40px;top:1406.62px;font-size:25px;color:#303843;font-weight:400;letter-spacing:0.188px;">content. </div>
<div class="t" style="left:1867.00px;top:1406.62px;font-size:25px;color:#303843;font-weight:400;letter-spacing:-0.033px;">You need to </div>
<div class="t" style="left:2006.10px;top:1406.62px;font-size:25px;color:#303843;font-weight:400;letter-spacing:0.231px;">proce…</div>
<div class="a" style="left:39.50px;top:1512.81px;width:2070.00px;height:1.30px;background:#dcdfe3;"></div>
<svg class="a" style="left:54px;top:1464.0px" width="40" height="40" viewBox="0 0 40 40"><path d="M11.5 32H9.5A3.5 3.5 0 0 1 6 28.5V10.5A3.5 3.5 0 0 1 9.5 7H27A4 4 0 0 1 31 11V12.6" fill="none" stroke="#33706d" stroke-width="1.8"/><g fill="#678e8c"><rect x="8.9" y="10.0" width="2" height="2"/><rect x="12.7" y="10.0" width="2" height="2"/><rect x="16.5" y="10.0" width="2" height="2"/><rect x="20.3" y="10.0" width="2" height="2"/><rect x="24.2" y="10.0" width="2" height="2"/><rect x="8.9" y="13.9" width="2" height="2"/><rect x="12.7" y="13.9" width="2" height="2"/><rect x="8.9" y="17.7" width="2" height="2"/><rect x="8.9" y="21.5" width="2" height="2"/><rect x="8.9" y="25.3" width="2" height="2"/></g><path d="M22.2 31.4A8.2 8.2 0 1 1 28 29L34.5 35.3" fill="none" stroke="#33706d" stroke-width="1.8"/></svg>
<div class="t" style="left:127.00px;top:1471.49px;font-size:24px;color:#303843;font-weight:400;letter-spacing:-0.145px;">Apr 15, 2024 @ 10:34:39.429</div>
<div class="a" style="left:511.20px;top:1464.61px;width:90.70px;height:36.40px;background:#fffb50;"></div>
<div class="t" style="left:513.30px;top:1470.05px;font-size:25px;color:#000;font-weight:400;letter-spacing:0.137px;">payload</div>
<div class="t" style="left:606.80px;top:1470.05px;font-size:25px;color:#303843;font-weight:400;letter-spacing:1.128px;">{&quot;model&quot;:&quot;</div>
<div class="t" style="left:728.10px;top:1470.05px;font-size:25px;color:#303843;font-weight:400;letter-spacing:0.222px;">gpt-3.5-turbo&quot;,&quot;</div>
<div class="t" style="left:899.50px;top:1470.05px;font-size:25px;color:#303843;font-weight:400;letter-spacing:-0.787px;">messages&quot;:</div>
<div class="t" style="left:1021.40px;top:1470.05px;font-size:25px;color:#303843;font-weight:400;letter-spacing:1.614px;">[{&quot;role&quot;:&quot;</div>
<div class="t" style="left:1128.10px;top:1470.05px;font-size:25px;color:#303843;font-weight:400;letter-spacing:-0.208px;">system&quot;,&quot;</div>
<div class="t" style="left:1230.10px;top:1470.05px;font-size:25px;color:#303843;font-weight:400;letter-spacing:0.470px;">content&quot;:&quot;</div>
<div class="t" style="left:1341.50px;top:1470.05px;font-size:25px;color:#303843;font-weight:400;letter-spacing:-0.070px;">You are an </div>
<div class="t" style="left:1467.70px;top:1470.05px;font-size:25px;color:#303843;font-weight:400;letter-spacing:-0.273px;">AI processing </div>
<div class="t" style="left:1622.30px;top:1470.05px;font-size:25px;color:#303843;font-weight:400;letter-spacing:0.092px;">social media </div>
<div class="t" style="left:1769.40px;top:1470.05px;font-size:25px;color:#303843;font-weight:400;letter-spacing:0.188px;">content. </div>
<div class="t" style="left:1867.00px;top:1470.05px;font-size:25px;color:#303843;font-weight:400;letter-spacing:-0.033px;">You need to </div>
<div class="t" style="left:2006.10px;top:1470.05px;font-size:25px;color:#303843;font-weight:400;letter-spacing:0.231px;">proce…</div>
<div class="a" style="left:39.50px;top:1576.24px;width:2070.00px;height:1.30px;background:#dcdfe3;"></div>
<svg class="a" style="left:54px;top:1527.4px" width="40" height="40" viewBox="0 0 40 40"><path d="M11.5 32H9.5A3.5 3.5 0 0 1 6 28.5V10.5A3.5 3.5 0 0 1 9.5 7H27A4 4 0 0 1 31 11V12.6" fill="none" stroke="#33706d" stroke-width="1.8"/><g fill="#678e8c"><rect x="8.9" y="10.0" width="2" height="2"/><rect x="12.7" y="10.0" width="2" height="2"/><rect x="16.5" y="10.0" width="2" height="2"/><rect x="20.3" y="10.0" width="2" height="2"/><rect x="24.2" y="10.0" width="2" height="2"/><rect x="8.9" y="13.9" width="2" height="2"/><rect x="12.7" y="13.9" width="2" height="2"/><rect x="8.9" y="17.7" width="2" height="2"/><rect x="8.9" y="21.5" width="2" height="2"/><rect x="8.9" y="25.3" width="2" height="2"/></g><path d="M22.2 31.4A8.2 8.2 0 1 1 28 29L34.5 35.3" fill="none" stroke="#33706d" stroke-width="1.8"/></svg>
<div class="t" style="left:127.00px;top:1534.92px;font-size:24px;color:#303843;font-weight:400;letter-spacing:-0.145px;">Apr 15, 2024 @ 10:34:39.201</div>
<div class="a" style="left:511.20px;top:1528.04px;width:90.70px;height:36.40px;background:#fffb50;"></div>
<div class="t" style="left:513.30px;top:1533.48px;font-size:25px;color:#000;font-weight:400;letter-spacing:0.137px;">payload</div>
<div class="t" style="left:606.80px;top:1533.48px;font-size:25px;color:#303843;font-weight:400;letter-spacing:1.128px;">{&quot;model&quot;:&quot;</div>
<div class="t" style="left:728.10px;top:1533.48px;font-size:25px;color:#303843;font-weight:400;letter-spacing:0.222px;">gpt-3.5-turbo&quot;,&quot;</div>
<div class="t" style="left:899.50px;top:1533.48px;font-size:25px;color:#303843;font-weight:400;letter-spacing:-0.787px;">messages&quot;:</div>
<div class="t" style="left:1021.40px;top:1533.48px;font-size:25px;color:#303843;font-weight:400;letter-spacing:1.614px;">[{&quot;role&quot;:&quot;</div>
<div class="t" style="left:1128.10px;top:1533.48px;font-size:25px;color:#303843;font-weight:400;letter-spacing:-0.208px;">system&quot;,&quot;</div>
<div class="t" style="left:1230.10px;top:1533.48px;font-size:25px;color:#303843;font-weight:400;letter-spacing:0.470px;">content&quot;:&quot;</div>
<div class="t" style="left:1341.50px;top:1533.48px;font-size:25px;color:#303843;font-weight:400;letter-spacing:-0.070px;">You are an </div>
<div class="t" style="left:1467.70px;top:1533.48px;font-size:25px;color:#303843;font-weight:400;letter-spacing:-0.273px;">AI processing </div>
<div class="t" style="left:1622.30px;top:1533.48px;font-size:25px;color:#303843;font-weight:400;letter-spacing:0.092px;">social media </div>
<div class="t" style="left:1769.40px;top:1533.48px;font-size:25px;color:#303843;font-weight:400;letter-spacing:0.188px;">content. </div>
<div class="t" style="left:1867.00px;top:1533.48px;font-size:25px;color:#303843;font-weight:400;letter-spacing:-0.033px;">You need to </div>
<div class="t" style="left:2006.10px;top:1533.48px;font-size:25px;color:#303843;font-weight:400;letter-spacing:0.231px;">proce…</div>
<svg class="a" style="left:2003px;top:1022px" width="26" height="26" viewBox="0 0 26 26"><circle cx="13" cy="13" r="10" fill="none" stroke="#4d8784" stroke-width="1.1"/><path d="M13 7.5v11M7.5 13h11" stroke="#2f6b68" stroke-width="1.4"/></svg>
<svg class="a" style="left:2038px;top:1022px" width="26" height="26" viewBox="0 0 26 26"><circle cx="13" cy="13" r="10" fill="none" stroke="#4d8784" stroke-width="1.1"/><path d="M7.5 13h11" stroke="#2f6b68" stroke-width="1.4"/></svg>
<div class="a" style="left:2075.10px;top:1022.40px;width:22.60px;height:20.10px;background:#2e6a67;border-radius:3.5px;"></div>
<svg class="a" style="left:2064px;top:1018px" width="40" height="48" viewBox="0 0 40 48"><path d="M17.6 19.1L27.2 11.1" stroke="#d8f3f0" stroke-width="1.5"/><path d="M23.5 10.2L28.2 9.6 27.6 14.3z" fill="#d8f3f0" stroke="#d8f3f0" stroke-width="1"/><path d="M10.8 17C10.8 13.2 15.6 13.2 15.6 17L16.2 25C16.2 20.6 20.6 20.6 20.8 25.3C20.8 21.2 25 21.2 25.1 25.8C25.6 22.5 30 22.8 30.4 25C32 24.8 32.8 26 32.8 28.5L32.8 36C32.8 38.5 30.2 41 28.6 43L15 42.6C14 40 11 36.6 8 33.6C6 31.6 4.3 29.6 4.5 28C4.8 25.8 7.8 25.6 9.6 27.6L10.9 28.8Z" fill="#fff" stroke="#000" stroke-width="1.6" stroke-linejoin="round"/><path d="M18.5 30.4v6.9M22.3 30.4v6.9M26.4 30.4v6.9" stroke="#111" stroke-width="1.4"/></svg>
<div class="a" style="left:921px;top:250.5px;width:766.6px;height:765.8px;background:#fbfcfd;border:1px solid #d9dce1;border-radius:6px;box-sizing:border-box;box-shadow:0 8px 18px rgba(52,55,65,0.18),0 2px 5px rgba(52,55,65,0.10);overflow:hidden;">
<div class="a" style="left:15.60px;top:17.50px;width:102.60px;height:40.40px;background:#fffb50;"></div>
<div class="t" style="left:17.00px;top:23.77px;font-size:28.5px;color:#000;font-weight:400;letter-spacing:0.159px;">payload</div>
<div class="t" style="left:124.00px;top:23.77px;font-size:28.5px;color:#303843;font-weight:400;letter-spacing:0.472px;">{&quot;model&quot;:&quot;gpt-3.5-turbo&quot;,&quot;messages&quot;:</div>
<div class="t" style="left:16.50px;top:69.92px;font-size:28.5px;color:#303843;font-weight:400;letter-spacing:0.267px;">[{&quot;role&quot;:&quot;system&quot;,&quot;content&quot;:&quot;You are an AI processing</div>
<div class="t" style="left:16.50px;top:116.07px;font-size:28.5px;color:#303843;font-weight:400;letter-spacing:0.053px;">social media content. You need to process the</div>
<div class="t" style="left:16.50px;top:162.22px;font-size:28.5px;color:#303843;font-weight:400;letter-spacing:0.252px;">messages.&quot;},{&quot;role&quot;:&quot;user&quot;,&quot;content&quot;:&quot;Your task is to</div>
<div class="t" style="left:16.50px;top:208.37px;font-size:28.5px;color:#303843;font-weight:400;letter-spacing:-0.188px;">process a social media message delimited by --- . Process</div>
<div class="t" style="left:16.50px;top:254.52px;font-size:28.5px;color:#303843;font-weight:400;letter-spacing:0.202px;">the message and give me this information divided by</div>
<div class="t" style="left:16.50px;top:300.67px;font-size:28.5px;color:#303843;font-weight:400;letter-spacing:0.454px;">symbol ; \t\t\tFirst is sentiment analysis to determine if</div>
<div class="t" style="left:16.50px;top:346.82px;font-size:28.5px;color:#303843;font-weight:400;letter-spacing:0.040px;">the message is positive or negative. Second, identify the</div>
<div class="t" style="left:16.50px;top:392.97px;font-size:28.5px;color:#303843;font-weight:400;letter-spacing:-0.134px;">language of the message: EN, RU, FR, etc\t\t\tThird, is</div>
<div class="t" style="left:16.50px;top:439.12px;font-size:28.5px;color:#303843;font-weight:400;letter-spacing:-0.257px;">there sarcasm in the message: has sarcasm, no sarcasm,</div>
<div class="t" style="left:16.50px;top:485.27px;font-size:28.5px;color:#303843;font-weight:400;letter-spacing:0.289px;">maybe has sarcasm\t\t\tFourth, closest category of the</div>
<div class="t" style="left:16.50px;top:531.42px;font-size:28.5px;color:#303843;font-weight:400;letter-spacing:0.023px;">message: News, Politics, Entertainment, Sports,</div>
<div class="t" style="left:16.50px;top:577.57px;font-size:28.5px;color:#303843;font-weight:400;letter-spacing:-0.032px;">Technology, Health and Wellness, Pop Culture, Travel,</div>
<div class="t" style="left:16.50px;top:623.72px;font-size:28.5px;color:#303843;font-weight:400;letter-spacing:0.190px;">Fashion and Beauty, Food, Social Issues\t\t\tFifth, if it</div>
<div class="t" style="left:16.50px;top:669.87px;font-size:28.5px;color:#303843;font-weight:400;letter-spacing:0.201px;">contains any offensive, rude, inappropriate language, or</div>
<div class="t" style="left:16.50px;top:716.02px;font-size:28.5px;color:#303843;font-weight:400;letter-spacing:0.114px;">sex language: inappropriate, appropriate For example: -</div>
<div class="t" style="left:16.50px;top:762.17px;font-size:28.5px;color:#303843;font-weight:400;">negative; has sarcasm; Politics; appropriate</div>
</div>
<div class="a" style="left:22.00px;top:1514.50px;width:2105.00px;height:15.50px;background:linear-gradient(rgba(236,238,242,0),rgba(236,238,242,0.75) 60%,rgba(240,242,245,0.85));"></div>
<div class="a" style="left:2071.1px;top:1458.1px;width:50.8px;height:51.6px;border-radius:50%;background:#535555;"></div>
<svg class="a" style="left:2066px;top:1454px" width="60" height="60" viewBox="0 0 60 60"><path d="M18 25.7V22.5a4 4 0 0 1 4-4h2.6M35.2 18.5h2.8a4 4 0 0 1 4 4v3.2M42 35.2v3.6a4 4 0 0 1-4 4h-2.8M24.6 42.8h-2.6a4 4 0 0 1-4-4v-3.6M23.6 25.5h12.8M23.6 30.6h12.8M23.6 35.9h8.6" fill="none" stroke="#fff" stroke-width="2" stroke-linecap="round"/></svg>
<svg class="a" style="left:2110px;top:1510px" width="30" height="20" viewBox="2110 1510 30 20"><path d="M2140 1520.9Q2137 1527 2120.9 1530H2140Z" fill="#000"/></svg>
</div>
</body></html>
